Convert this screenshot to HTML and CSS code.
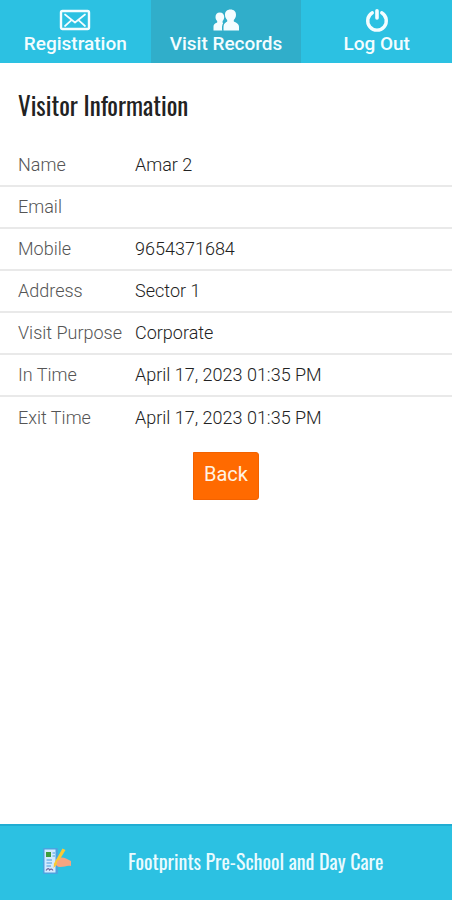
FILE: index.html
```html
<!DOCTYPE html>
<html lang="en">
<head>
<meta charset="utf-8">
<meta name="viewport" content="width=device-width, initial-scale=1">
<title>Visitor Information</title>
<link rel="stylesheet" href="styles.css">
</head>
<body>
<nav class="tabs">
  <a class="tab" href="#registration">
    <svg class="tab-icon" viewBox="0 0 32 24" aria-hidden="true">
      <g fill="none" stroke="currentColor" stroke-linejoin="round" stroke-linecap="round">
        <rect x="2" y="3" width="28" height="18" rx="1.5" stroke-width="2.4"/>
        <path d="M6 6.5L16 14.5L26 6.5M6 18L12.5 12.2M26 18L19.5 12.2" stroke-width="1.7"/>
      </g>
    </svg>
    <span>Registration</span>
  </a>
  <a class="tab tab-active" href="#records" aria-current="page">
    <svg class="tab-icon" viewBox="0 0 32 24" aria-hidden="true">
      <path fill="currentColor" d="M9.800 4.500C12.600 4.500 14.200 6.300 14.200 9C14.200 10.800 13.500 12 12.600 12.900V14.500C13.500 16 12.500 18 12.500 22.500H3.500V18.500C3.500 16.500 4.500 15.500 7.200 14.500V12.900C6.200 12 5.500 10.800 5.500 9C5.500 6.300 7 4.500 9.800 4.500Z"/>
      <path fill="currentColor" d="M20.500 1.500C24 1.500 26 3.600 26 6.800C26 9.200 25 10.800 23.800 12V13.500C27 15 29 16 29 18.700V22.500H13.500V18.700C13.500 16 14.500 15 17.200 13.500V12C16 10.800 15 9.200 15 6.800C15 3.600 17 1.500 20.500 1.500Z"/>
      <path d="M14.600 10C15 12 15.500 12.500 16 13.500C13.500 15 12.500 16.500 12.500 19V22.500" fill="none" stroke="#30aeca" stroke-width="1"/>
    </svg>
    <span>Visit Records</span>
  </a>
  <a class="tab" href="#logout">
    <svg class="tab-icon" viewBox="0 0 32 24" aria-hidden="true">
      <g fill="none" stroke="currentColor" stroke-linecap="round">
        <path d="M11.300 4.800A9.300 9.300 0 1 0 20.700 4.800" stroke-width="3.400"/>
        <path d="M16 2.800V10" stroke-width="3.600"/>
      </g>
    </svg>
    <span>Log Out</span>
  </a>
</nav>
<main class="content">
  <h1 class="title">Visitor Information</h1>
  <table class="details">
    <tbody>
      <tr><th scope="row">Name</th><td>Amar 2</td></tr>
      <tr><th scope="row">Email</th><td></td></tr>
      <tr><th scope="row">Mobile</th><td>9654371684</td></tr>
      <tr><th scope="row">Address</th><td>Sector 1</td></tr>
      <tr><th scope="row">Visit Purpose</th><td>Corporate</td></tr>
      <tr><th scope="row">In Time</th><td>April 17, 2023 01:35 PM</td></tr>
      <tr><th scope="row">Exit Time</th><td>April 17, 2023 01:35 PM</td></tr>
    </tbody>
  </table>
  <button class="back" type="button">Back</button>
</main>
<footer class="footer">
  <svg class="footer-icon" viewBox="0 0 30 28" aria-hidden="true">
    <rect x="1" y="1" width="15" height="26" rx="1" fill="#4aa3e0"/>
    <path d="M2.500 2.500H13.500V25.500H2.500Z" fill="#d3eaff"/>
    <rect x="4" y="5" width="5" height="5" fill="#3f9d3c"/>
    <path d="M10.500 6H13M10.500 9H13M4.500 13H10M4.500 16H10M4.500 19H9" stroke="#78b5e8" stroke-width="1.300"/>
    <path d="M4 23.500C6 20.500 7 21.500 7.500 23C9 21.500 10 22 11 23.500" fill="none" stroke="#75679b" stroke-width="1.200"/>
    <path d="M13.500 13.500C16 10.500 20 9.500 24 11.500L29 14V19C25 18 23 20 18 20C15.500 20 14 18.500 13.500 16Z" fill="#f6a581"/>
    <path d="M20.500 1.500L23.500 3L14.500 18L11.500 21L12 16.500Z" fill="#fbc934"/>
    <path d="M15.500 13.500L21 12.500L18 16L14.500 17Z" fill="#f6a581"/>
  </svg>
  <span class="footer-name">Footprints Pre-School and Day Care</span>
</footer>
</body>
</html>
```

FILE: styles.css
```css
* {
  box-sizing: border-box;
}

body {
  display: flex;
  flex-direction: column;
  min-height: 100vh;
  margin: 0;
  background: #fff;
  color: #222;
  font-family: Roboto, "Liberation Sans", sans-serif;
  font-size: 18px;
}

.tabs {
  display: grid;
  grid-template-columns: repeat(3, 1fr);
  background: #2cc1e2;
}

.tab {
  display: flex;
  flex-direction: column;
  align-items: center;
  padding: 8px 0;
  color: #f4fdff;
  font-size: 19px;
  font-weight: 500;
  line-height: 23px;
  text-decoration: none;
}

.tab-active {
  background: #30aeca;
}

.tab-icon {
  width: 32px;
  height: 24px;
}

.content {
  display: flex;
  flex: 1;
  flex-direction: column;
}

.title,
.footer-name {
  font-family: Oswald, "Roboto Condensed", "Open Sans Condensed", "Liberation Sans Narrow", "Liberation Sans", sans-serif;
}

.title {
  margin: 25px 18px 22px;
  color: #222;
  font-size: 25px;
  font-weight: 400;
  line-height: 34px;
}

.details {
  width: 100%;
  border-collapse: collapse;
  font-weight: 300;
  line-height: 24px;
  text-align: left;
}

.details th,
.details td {
  height: 42px;
  padding: 0;
  border-bottom: 2px solid #e9e9e9;
}

.details tr:last-child > * {
  border-bottom: 0;
}

.details th {
  width: 135px;
  padding-left: 18px;
  color: #555;
  font-weight: 300;
  white-space: nowrap;
}

.back {
  align-self: center;
  margin: 14px 0;
  padding: 9px 10px 13px;
  border: 1px solid #f26200;
  border-radius: 0 3px 3px 0;
  background: #ff6a00;
  color: #fff3e4;
  font-family: inherit;
  font-size: 20px;
  line-height: 24px;
}

.footer {
  display: grid;
  grid-template-columns: 1fr 3fr;
  align-items: center;
  height: 76px;
  padding-bottom: 5px;
  border-top: 2px solid #20add3;
  background: #2cc1e2;
}

.footer-icon {
  justify-self: center;
  width: 30px;
  height: 28px;
}

.footer-name {
  padding-left: 15px;
  color: #eafbff;
  font-size: 20px;
}
```
